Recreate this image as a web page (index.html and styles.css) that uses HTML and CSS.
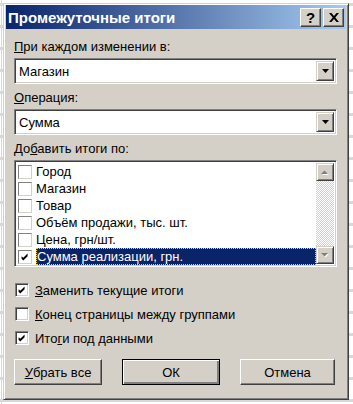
FILE: index.html
```html
<!DOCTYPE html>
<html lang="ru">
<head>
    <meta charset="UTF-8">
    <title>Промежуточные итоги</title>
    <link rel="stylesheet" href="styles.css">
</head>
<body>
    <div class="dialog">
        <!-- Title bar -->
        <div class="titlebar">
            <span class="title">Промежуточные итоги</span>
            <div class="title-buttons">
                <span class="tbtn help">?</span>
                <span class="tbtn close">
                    <svg viewBox="0 0 10 9" width="10" height="9"><path d="M0 0h2.5l2.5 3 2.5-3H10L6.3 4.5 10 9H7.5L5 6 2.5 9H0l3.7-4.5z" fill="#000"/></svg>
                </span>
            </div>
        </div>

        <div class="dialog-body">
            <div class="field-label"><u>П</u>ри каждом изменении в:</div>
            <div class="combo">
                <span class="combo-text">Магазин</span>
                <span class="combo-btn"><svg viewBox="0 0 7 4" width="7" height="4"><path d="M0 0h7L3.5 4z" fill="#000"/></svg></span>
            </div>

            <div class="field-label second"><u>О</u>перация:</div>
            <div class="combo">
                <span class="combo-text">Сумма</span>
                <span class="combo-btn"><svg viewBox="0 0 7 4" width="7" height="4"><path d="M0 0h7L3.5 4z" fill="#000"/></svg></span>
            </div>

            <div class="field-label second">До<u>б</u>авить итоги по:</div>
            <div class="listbox">
                <ul class="list-items">
                    <li class="list-item"><span class="box"></span>Город</li>
                    <li class="list-item"><span class="box"></span>Магазин</li>
                    <li class="list-item"><span class="box"></span>Товар</li>
                    <li class="list-item"><span class="box"></span>Объём продажи, тыс. шт.</li>
                    <li class="list-item"><span class="box"></span>Цена, грн/шт.</li>
                    <li class="list-item selected"><span class="box checked"></span><span class="item-text">Сумма реализации, грн.</span></li>
                </ul>
                <div class="scrollbar">
                    <span class="sbtn"><svg viewBox="0 0 8 5" width="8" height="5"><path d="M1 5h7L4.5 1.5z" fill="#fff"/><path d="M0 4h7L3.5 0.5z" fill="#808080"/></svg></span>
                    <span class="track"></span>
                    <span class="sbtn"><svg viewBox="0 0 8 5" width="8" height="5"><path d="M1 1h7L4.5 4.5z" fill="#fff"/><path d="M0 0h7L3.5 3.5z" fill="#808080"/></svg></span>
                </div>
            </div>

            <div class="options">
                <div class="option"><span class="box checked"></span><span><u>З</u>аменить текущие итоги</span></div>
                <div class="option"><span class="box"></span><span><u>К</u>онец страницы между группами</span></div>
                <div class="option"><span class="box checked"></span><span>Ито<u>г</u>и под данными</span></div>
            </div>

            <div class="actions">
                <span class="btn remove"><u>У</u>брать все</span>
                <span class="btn ok">ОК</span>
                <span class="btn cancel">Отмена</span>
            </div>
        </div>
    </div>
</body>
</html>
```

FILE: styles.css
```css
* {
    margin: 0;
    padding: 0;
    box-sizing: border-box;
}

body {
    width: 353px;
    height: 404px;
    overflow: hidden;
    padding: 3px 0 0 3px;
    font-family: "Liberation Sans", Arial, sans-serif;
    font-size: 12px;
    color: #000;
    background-color: #fff;
    /* spreadsheet grid behind the dialog */
    background-image:
        linear-gradient(to bottom, transparent 0 19px, #d8d8d8 19px 20px),
        linear-gradient(to right, #d8d8d8 1px, transparent 1px);
    background-size: 100% 22px, 100% 100%;
    background-position: 0 6px, 1px 0;
}

/* Window frame */
.dialog {
    width: 346px;
    height: 397px;
    display: flex;
    flex-direction: column;
    background-color: #d4d0c8;
    border: 1px solid;
    border-color: #d4d0c8 #404040 #404040 #d4d0c8;
    box-shadow: inset 1px 1px #fff, inset -1px -1px #808080;
    padding: 1px 2px 2px 2px;
}

.titlebar {
    height: 24px;
    display: flex;
    align-items: center;
    justify-content: space-between;
    padding: 0 2px 0 2px;
    background: linear-gradient(to right, #0a246a, #a6caf0);
}

.title {
    color: #fff;
    font-weight: bold;
    font-size: 15px;
}

.title-buttons {
    display: flex;
    gap: 2px;
}

.tbtn {
    width: 21px;
    height: 19px;
    display: flex;
    align-items: center;
    justify-content: center;
    background-color: #d4d0c8;
    border: 1px solid;
    border-color: #fff #404040 #404040 #fff;
    box-shadow: inset -1px -1px #808080;
    font-weight: bold;
    font-size: 15px;
}

/* Dialog contents */
.dialog-body {
    flex: 1;
    padding: 10px 9px 0 8px;
}

.field-label {
    line-height: 16px;
    margin-bottom: 3px;
    font-size: 13px;
}

.field-label.second {
    margin-top: 6px;
}

.combo {
    height: 26px;
    display: flex;
    align-items: center;
    justify-content: space-between;
    background-color: #fff;
    border: 1px solid;
    border-color: #808080 #fff #fff #808080;
    box-shadow: inset 1px 1px #404040, inset -1px -1px #d4d0c8;
    padding: 2px;
    font-size: 13px;
}

.combo-text {
    padding-left: 2px;
}

.combo-btn {
    width: 18px;
    height: 100%;
    display: flex;
    align-items: center;
    justify-content: center;
    background-color: #d4d0c8;
    border: 1px solid;
    border-color: #d4d0c8 #404040 #404040 #d4d0c8;
    box-shadow: inset 1px 1px #fff, inset -1px -1px #808080;
}

/* List with check boxes */
.listbox {
    height: 107px;
    display: flex;
    background-color: #fff;
    border: 1px solid;
    border-color: #808080 #fff #fff #808080;
    box-shadow: inset 1px 1px #404040, inset -1px -1px #d4d0c8;
    padding: 2px;
}

.list-items {
    flex: 1;
    list-style: none;
    font-size: 13px;
}

.list-item {
    height: 17px;
    display: flex;
    align-items: center;
    gap: 4px;
    padding-left: 1px;
}

.list-item .box {
    width: 14px;
    height: 14px;
    border-color: #808080 #d4d0c8 #d4d0c8 #808080;
    box-shadow: none;
}

.list-item.selected .item-text {
    flex: 1;
    height: 100%;
    display: flex;
    align-items: center;
    padding-left: 1px;
    background-color: #0a246a;
    color: #fff;
    outline: 1px dotted #ffd700;
    outline-offset: -1px;
}

.scrollbar {
    width: 18px;
    display: flex;
    flex-direction: column;
}

.sbtn {
    height: 18px;
    display: flex;
    align-items: center;
    justify-content: center;
    background-color: #d4d0c8;
    border: 1px solid;
    border-color: #d4d0c8 #404040 #404040 #d4d0c8;
    box-shadow: inset 1px 1px #fff, inset -1px -1px #808080;
}

.track {
    flex: 1;
    background: repeating-conic-gradient(#fff 0 25%, #d4d0c8 0 50%) 0 0 / 2px 2px;
}

/* Check box */
.box {
    width: 14px;
    height: 14px;
    flex-shrink: 0;
    background-color: #fff;
    border: 1px solid;
    border-color: #808080 #fff #fff #808080;
    box-shadow: inset 1px 1px #404040, inset -1px -1px #d4d0c8;
}

.box.checked {
    background-image: url("data:image/svg+xml,%3Csvg xmlns='http://www.w3.org/2000/svg' viewBox='0 0 14 14'%3E%3Cpath d='M3 6l2 2 5-5v3l-5 5-2-2z' fill='%23000'/%3E%3C/svg%3E");
    background-size: 100% 100%;
}

.options {
    margin-top: 11px;
    font-size: 13px;
}

.option {
    height: 24px;
    display: flex;
    align-items: center;
    gap: 6px;
    padding-left: 1px;
}

/* Push buttons */
.actions {
    display: flex;
    justify-content: space-between;
    margin-top: 9px;
    padding-right: 2px;
    font-size: 13px;
}

.btn {
    height: 26px;
    display: flex;
    align-items: center;
    justify-content: center;
    background-color: #d4d0c8;
    border: 1px solid;
    border-color: #fff #404040 #404040 #fff;
    box-shadow: inset -1px -1px #808080;
}

.btn.remove {
    width: 88px;
}

.btn.ok {
    width: 98px;
    border: 1px solid #000;
    box-shadow: inset 1px 1px #fff, inset -2px -2px #808080, inset -1px -1px #404040;
}

.btn.cancel {
    width: 95px;
}
```
